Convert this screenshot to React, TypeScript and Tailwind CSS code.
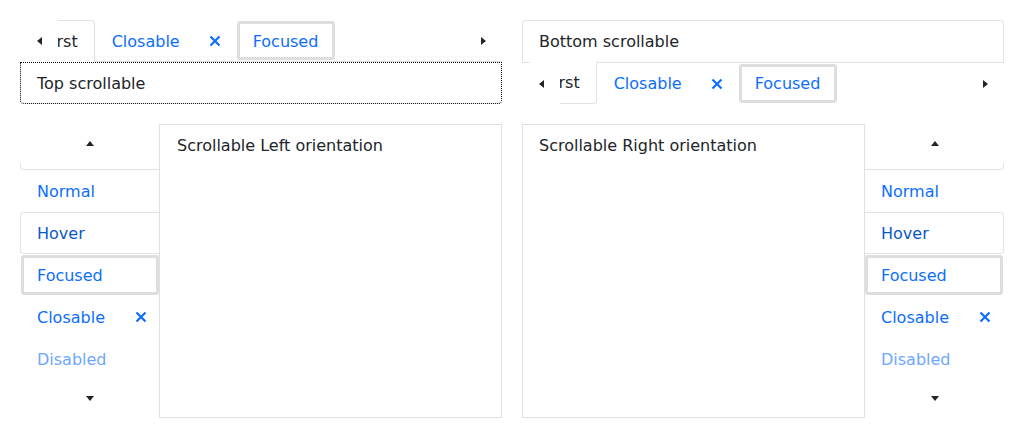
import React from 'react';

type Dir = 'left' | 'right' | 'up' | 'down';

const Arrow = ({ dir }: { dir: Dir }) => {
  const horizontal = dir === 'left' || dir === 'right';
  const points: Record<Dir, string> = {
    left: '5,0 5,8 0,4',
    right: '0,0 0,8 5,4',
    up: '0,5 8,5 4,0',
    down: '0,0 8,0 4,5',
  };
  return (
    <svg width={horizontal ? 5 : 8} height={horizontal ? 8 : 5} viewBox={horizontal ? '0 0 5 8' : '0 0 8 5'}>
      <polygon points={points[dir]} fill="#212529" />
    </svg>
  );
};

const CloseIcon = () => (
  <svg width="16" height="16" viewBox="0 0 16 16" className="shrink-0">
    <path d="M3.5 3.5 L12.5 12.5 M12.5 3.5 L3.5 12.5" stroke="#0d6efd" strokeWidth="2.2" strokeLinecap="butt" />
  </svg>
);

// Onglets horizontaux (en haut ou en bas du panneau)
const HTabs = ({ bottom, label }: { bottom?: boolean; label: string }) => {
  const shift = bottom ? '' : 'pt-[2px]';
  const nav = (
    <div
      className={`relative flex h-[42px] border-[#dee2e6] pl-[7px] ${
        bottom ? 'items-start border-t' : 'items-end border-b'
      }`}
    >
      <div
        className={`flex h-[42px] items-center border border-[#dee2e6] bg-white px-4 text-[#212529] ${shift} ${
          bottom ? '-mt-px rounded-b-[4px] border-t-white' : '-mb-px rounded-t-[4px] border-b-white'
        }`}
      >
        First
      </div>
      <div className={`flex h-[41px] items-center border border-transparent pl-4 pr-3 text-[#0d6efd] ${shift}`}>
        <span>Closable</span>
        <span className={`ml-[27px] ${bottom ? '' : '-mt-[2px]'}`}>
          <CloseIcon />
        </span>
      </div>
      <div
        className={`flex h-[41px] items-center rounded-[4px] border border-transparent pl-4 pr-[17px] text-[#0d6efd] shadow-[inset_0_0_0_3px_#dedede] ${shift}`}
      >
        Focused
      </div>
      <div
        className={`absolute left-0 flex w-[38px] items-center justify-center bg-white ${
          bottom ? 'top-0 h-[41px]' : 'top-0 h-[42px]'
        }`}
      >
        <Arrow dir="left" />
      </div>
      <div className="absolute right-0 top-0 flex h-[41px] w-[38px] items-center justify-center bg-white">
        <Arrow dir="right" />
      </div>
    </div>
  );

  const panel = bottom ? (
    <div className="h-[42px] rounded-t-[4px] border border-b-0 border-[#dee2e6] px-4 pb-[7px] pt-[9px] text-[#212529]">
      {label}
    </div>
  ) : (
    <div className="h-[42px] rounded-b-[4px] border border-dotted border-black px-4 pb-[7px] pt-[9px] text-[#212529]">
      {label}
    </div>
  );

  return (
    <div className="flex flex-col">
      {bottom ? panel : nav}
      {bottom ? nav : panel}
    </div>
  );
};

// Onglets verticaux (à gauche ou à droite du panneau)
const VTabs = ({ right, label }: { right?: boolean; label: string }) => {
  const side = right ? 'rounded-r-[4px] border-l-transparent' : 'rounded-l-[4px] border-r-transparent';
  const btnInset = right ? 'left-px right-0' : 'left-0 right-px';
  const list = (
    <div className={`relative z-10 h-full w-[140px] shrink-0 overflow-hidden ${right ? '-ml-px' : '-mr-px'}`}>
      <div className="flex flex-col pt-[4px]">
        <div className={`flex h-[42px] items-center border border-[#dee2e6] px-4 pt-[2px] text-[#212529] ${side}`}>
          First
        </div>
        <div className="flex h-[42px] items-center border border-transparent px-4 pt-[2px] text-[#0d6efd]">Normal</div>
        <div className={`flex h-[42px] items-center border border-[#dee2e6] px-4 pt-[2px] text-[#0a58ca] ${side}`}>
          Hover
        </div>
        <div className="flex h-[42px] items-center rounded-[4px] border border-transparent px-4 pt-[2px] text-[#0d6efd] shadow-[inset_0_0_0_3px_#dedede]">
          Focused
        </div>
        <div className="flex h-[42px] items-center border border-transparent pl-4 pr-[10px] pt-[2px] text-[#0d6efd]">
          <span>Closable</span>
          <span className="-mt-[2px] ml-auto">
            <CloseIcon />
          </span>
        </div>
        <div className="flex h-[42px] items-center border border-transparent px-4 pt-[2px] text-[#6ea8fe]">Disabled</div>
      </div>
      <div className={`absolute top-0 flex h-[39px] items-center justify-center bg-white ${btnInset}`}>
        <Arrow dir="up" />
      </div>
      <div className={`absolute bottom-px flex h-[37px] items-center justify-center bg-white ${btnInset}`}>
        <Arrow dir="down" />
      </div>
    </div>
  );

  const panel = (
    <div
      className={`h-full min-w-0 flex-1 border border-[#dee2e6] pb-[7px] pr-4 pt-[9px] text-[#212529] ${
        right ? 'pl-4' : 'pl-[17px]'
      }`}
    >
      {label}
    </div>
  );

  return (
    <div className="flex h-[294px]">
      {right ? panel : list}
      {right ? list : panel}
    </div>
  );
};

export default function App() {
  return (
    <div className="h-[438px] w-[1024px] bg-white p-5 font-['DejaVu_Sans',sans-serif] text-base leading-6">
      <div className="grid grid-cols-2 gap-5">
        <HTabs label="Top scrollable" />
        <HTabs bottom label="Bottom scrollable" />
        <VTabs label="Scrollable Left orientation" />
        <VTabs right label="Scrollable Right orientation" />
      </div>
    </div>
  );
}
